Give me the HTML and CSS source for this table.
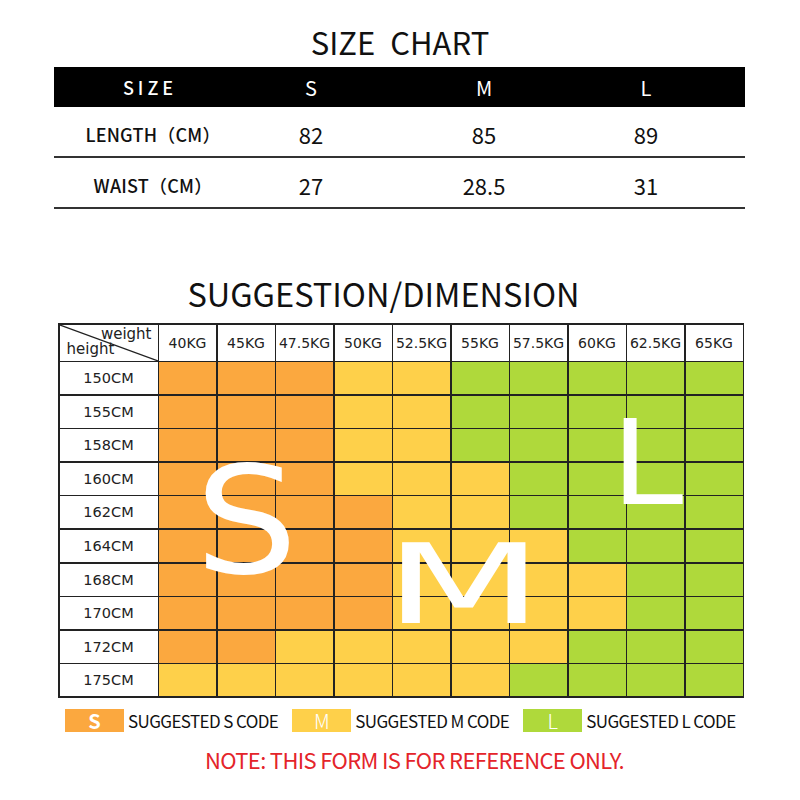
FILE: index.html
```html
<!DOCTYPE html>
<html>
<head>
<meta charset="utf-8">
<link rel="stylesheet" href="styles.css">
</head>
<body>
<div class="page">
  <h1 class="title">SIZE&nbsp;CHART</h1>
  <div class="size-table">
    <div class="srow head"><div class="c1 sizehd">SIZE</div><div>S</div><div>M</div><div>L</div></div>
    <div class="srow"><div class="c1">LENGTH（CM）</div><div>82</div><div>85</div><div>89</div></div>
    <div class="srow"><div class="c1">WAIST（CM）</div><div>27</div><div>28.5</div><div>31</div></div>
  </div>

  <h2 class="title2">SUGGESTION/DIMENSION</h2>

  <div class="chart">
    <div class="cell corner">
      <svg class="diag" viewBox="0 0 100 100" preserveAspectRatio="none"><line x1="0" y1="0" x2="100" y2="100" stroke="#222" stroke-width="1.2" vector-effect="non-scaling-stroke"/></svg>
      <span class="w">weight</span>
      <span class="h">height</span>
    </div>
    <div class="cell kg">40KG</div><div class="cell kg">45KG</div><div class="cell kg">47.5KG</div><div class="cell kg">50KG</div><div class="cell kg">52.5KG</div><div class="cell kg">55KG</div><div class="cell kg">57.5KG</div><div class="cell kg">60KG</div><div class="cell kg">62.5KG</div><div class="cell kg">65KG</div>

    <div class="cell lab">150CM</div><div class="cell o"></div><div class="cell o"></div><div class="cell o"></div><div class="cell y"></div><div class="cell y"></div><div class="cell g"></div><div class="cell g"></div><div class="cell g"></div><div class="cell g"></div><div class="cell g"></div>
    <div class="cell lab">155CM</div><div class="cell o"></div><div class="cell o"></div><div class="cell o"></div><div class="cell y"></div><div class="cell y"></div><div class="cell g"></div><div class="cell g"></div><div class="cell g"></div><div class="cell g"></div><div class="cell g"></div>
    <div class="cell lab">158CM</div><div class="cell o"></div><div class="cell o"></div><div class="cell o"></div><div class="cell y"></div><div class="cell y"></div><div class="cell g"></div><div class="cell g"></div><div class="cell g"></div><div class="cell g"></div><div class="cell g"></div>
    <div class="cell lab">160CM</div><div class="cell o"></div><div class="cell o"></div><div class="cell o"></div><div class="cell y"></div><div class="cell y"></div><div class="cell y"></div><div class="cell g"></div><div class="cell g"></div><div class="cell g"></div><div class="cell g"></div>
    <div class="cell lab">162CM</div><div class="cell o"></div><div class="cell o"></div><div class="cell o"></div><div class="cell o"></div><div class="cell y"></div><div class="cell y"></div><div class="cell g"></div><div class="cell g"></div><div class="cell g"></div><div class="cell g"></div>
    <div class="cell lab">164CM</div><div class="cell o"></div><div class="cell o"></div><div class="cell o"></div><div class="cell o"></div><div class="cell y"></div><div class="cell y"></div><div class="cell y"></div><div class="cell g"></div><div class="cell g"></div><div class="cell g"></div>
    <div class="cell lab">168CM</div><div class="cell o"></div><div class="cell o"></div><div class="cell o"></div><div class="cell o"></div><div class="cell y"></div><div class="cell y"></div><div class="cell y"></div><div class="cell y"></div><div class="cell g"></div><div class="cell g"></div>
    <div class="cell lab">170CM</div><div class="cell o"></div><div class="cell o"></div><div class="cell o"></div><div class="cell o"></div><div class="cell y"></div><div class="cell y"></div><div class="cell y"></div><div class="cell y"></div><div class="cell g"></div><div class="cell g"></div>
    <div class="cell lab">172CM</div><div class="cell o"></div><div class="cell o"></div><div class="cell y"></div><div class="cell y"></div><div class="cell y"></div><div class="cell y"></div><div class="cell y"></div><div class="cell g"></div><div class="cell g"></div><div class="cell g"></div>
    <div class="cell lab">175CM</div><div class="cell y"></div><div class="cell y"></div><div class="cell y"></div><div class="cell y"></div><div class="cell y"></div><div class="cell y"></div><div class="cell g"></div><div class="cell g"></div><div class="cell g"></div><div class="cell g"></div>

    <span class="big big-s">S</span>
    <span class="big big-m">M</span>
    <span class="big big-l">L</span>
  </div>

  <div class="legend">
    <div class="item"><span class="box o bs">S</span><span class="ltext">SUGGESTED S CODE</span></div>
    <div class="item"><span class="box y bm">M</span><span class="ltext">SUGGESTED M CODE</span></div>
    <div class="item"><span class="box g bl">L</span><span class="ltext">SUGGESTED L CODE</span></div>
  </div>

  <p class="note">NOTE: THIS FORM IS FOR REFERENCE ONLY.</p>
</div>
</body>
</html>
```

FILE: styles.css
```css
html, body {
  margin: 0;
  padding: 0;
  background: #fff;
}

.page {
  width: 800px;
  height: 800px;
  font-family: "Noto Sans CJK SC", "Noto Sans", sans-serif;
  color: #111;
}

.title {
  margin: 0;
  padding-top: 22px;
  height: 45px;
  line-height: 40px;
  font-size: 31px;
  font-weight: 400;
  text-align: center;
  word-spacing: 8px;
}

.size-table {
  margin-left: 54px;
  width: 691px;
}

.srow {
  display: grid;
  grid-template-columns: 192px 130px 216px 108px;
  border-bottom: 2px solid #333;
  align-items: center;
  font-size: 22px;
  padding-top: 5px;
  box-sizing: content-box;
  height: 44px;
}

.srow > div {
  text-align: center;
}

.srow .c1 {
  font-size: 18px;
  font-weight: 500;
  letter-spacing: 0.2px;
  padding-left: 6px;
}

.srow.head {
  background: #000;
  color: #fff;
  height: 40px;
  padding-top: 0;
  border-bottom: none;
  font-size: 20px;
}

.srow.head .sizehd {
  font-size: 18px;
  letter-spacing: 4px;
  font-weight: 500;
  padding-left: 0;
}

.title2 {
  margin: 64px 0 10px;
  padding-right: 33px;
  line-height: 40px;
  height: 40px;
  font-size: 32.5px;
  font-weight: 400;
  text-align: center;
}

.chart {
  position: relative;
  margin-left: 58px;
  width: 686px;
  height: 375px;
  box-sizing: border-box;
  display: grid;
  grid-template-columns: 98px repeat(10, 1fr);
  grid-template-rows: 36px repeat(10, 1fr);
  gap: 1.5px;
  padding: 1.5px;
  background: #222;
  overflow: hidden;
}

.cell {
  background: #fff;
  display: flex;
  align-items: center;
  justify-content: center;
  font-family: "DejaVu Sans", sans-serif;
  font-size: 14.5px;
  color: #222;
}

.cell.kg {
  font-size: 14px;
  white-space: nowrap;
}

.corner {
  position: relative;
  flex-direction: column;
  align-items: stretch;
  font-size: 15px;
  line-height: 15px;
  padding: 0 6px 2px 7px;
}

.corner .w {
  align-self: flex-end;
}

.corner .h {
  align-self: flex-start;
}

.diag {
  position: absolute;
  left: 0;
  top: 0;
  width: 100%;
  height: 100%;
}

.o { background: #fba83f; }
.y { background: #fed04a; }
.g { background: #afd93b; }

.big {
  position: absolute;
  font-family: "DejaVu Sans", sans-serif;
  color: #fff;
  line-height: 1;
  pointer-events: none;
}

.big-s {
  left: 137px;
  top: 123px;
  font-size: 150px;
  transform: scaleX(1.08);
  transform-origin: left top;
}

.big-m {
  left: 326px;
  top: 207px;
  font-size: 110px;
  transform: scaleX(1.68);
  transform-origin: left top;
}

.big-l {
  left: 553px;
  top: 81px;
  font-size: 118px;
  transform: scaleX(1.1);
  transform-origin: left top;
}

.legend {
  display: flex;
  align-items: center;
  margin-top: 11px;
  padding-left: 65px;
  height: 23px;
  gap: 14px;
}

.item {
  display: flex;
  align-items: center;
  gap: 4px;
}

.box {
  width: 59px;
  height: 23px;
  display: flex;
  align-items: center;
  justify-content: center;
  color: #fff;
  font-size: 20px;
  line-height: 23px;
}

.box.bs { font-weight: 700; }
.box.bm, .box.bl { font-weight: 300; }

.ltext {
  font-size: 17px;
  letter-spacing: -0.6px;
  color: #111;
}

.note {
  margin: 12px 0 0;
  padding-left: 29px;
  text-align: center;
  color: #e4242a;
  font-size: 22px;
  letter-spacing: -0.65px;
  line-height: 30px;
}
```
